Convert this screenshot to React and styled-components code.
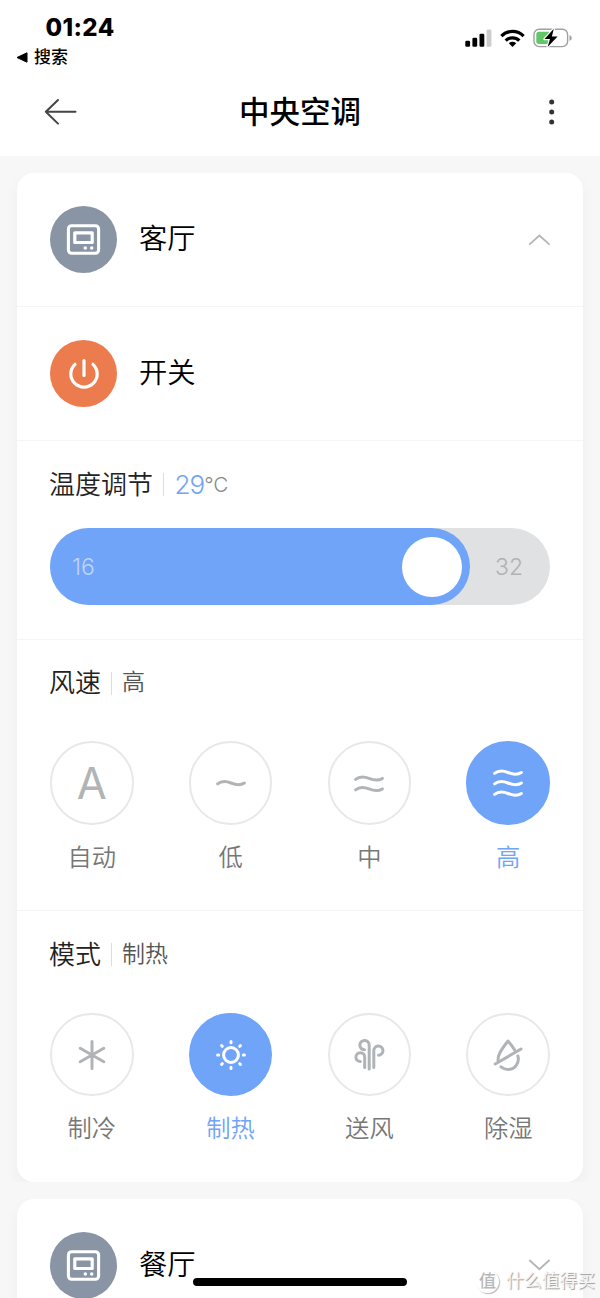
import React from 'react';
import styled, { createGlobalStyle } from 'styled-components';

const GlobalStyle = createGlobalStyle`
  * {
    box-sizing: border-box;
  }

  body {
    margin: 0;
    background: #f7f7f7;
    font-family: "Inter", "Noto Sans CJK SC", sans-serif;
  }
`;

const StyledScreen = styled.div`
  position: relative;
  width: 600px;
  height: 1298px;
  overflow: hidden;
  background: #f7f7f7;
`;

const StyledHeader = styled.header`
  height: 156px;
  background: #fff;
`;

const StyledStatusBar = styled.div`
  display: flex;
  justify-content: space-between;
  height: 68px;
  padding: 14px 27px 0 16px;
`;

const StyledTime = styled.div`
  padding-left: 29.5px;
  font-size: 24px;
  line-height: 28px;
  font-weight: 780;
  letter-spacing: 0.4px;
  color: #000;
`;

const StyledBackToApp = styled.div`
  display: flex;
  align-items: center;
  gap: 6px;
  margin-top: 5px;
  font-size: 17px;
  line-height: 20px;
  font-weight: 500;
  color: #000;
`;

const StyledStatusIcons = styled.div`
  display: flex;
  align-items: center;
  gap: 8px;
  height: 48px;
`;

const StyledNavBar = styled.div`
  display: flex;
  align-items: center;
  justify-content: space-between;
  height: 88px;
  padding: 0 43px;
`;

const StyledTitle = styled.h1`
  margin: 0;
  font-size: 30.5px;
  line-height: 40px;
  font-weight: 500;
  color: #000;
`;

const StyledMain = styled.main`
  display: flex;
  flex-direction: column;
  gap: 17px;
  padding: 17px;
`;

const StyledCard = styled.section`
  border-radius: 17px;
  background: #fff;
  box-shadow: 0 6px 16px rgba(0, 0, 0, 0.04);
  clip-path: inset(0 -17px);
`;

const StyledRow = styled.div`
  display: flex;
  align-items: center;
  height: 134px;
  padding: 0 33px;
  border-bottom: 1px solid #f5f5f5;
`;

const StyledRowIcon = styled.div`
  display: flex;
  align-items: center;
  justify-content: center;
  width: 67px;
  height: 67px;
  border-radius: 50%;
  background: ${(props) => props.$color};
`;

const StyledRowName = styled.div`
  flex: 1;
  padding: 0 0 1px 22px;
  font-size: 28.3px;
  line-height: 40px;
  font-weight: 350;
  color: #000;
`;

const StyledSection = styled.div`
  height: ${(props) => props.$height}px;
  padding: 24.5px 33px 0;

  & + & {
    border-top: 1px solid #f5f5f5;
  }
`;

const StyledSectionHead = styled.div`
  display: flex;
  align-items: center;
  height: 37px;
  margin-left: -1px;
  font-size: 26px;
  line-height: 37px;
  font-weight: 350;
  color: #222;
`;

const StyledDivider = styled.span`
  width: 1px;
  height: 23px;
  margin: 1px 10px 0 10px;
  background: #ddd;
`;

const StyledSectionValue = styled.span`
  font-size: 23px;
  font-weight: 330;
  color: #555;
`;

const StyledDegrees = styled.span`
  margin: 1px 0 0 0.5px;
  font-size: 26px;
  font-weight: 300;
  letter-spacing: -1px;
  color: #70a4f8;
`;

const StyledUnit = styled.span`
  font-size: 20.5px;
  font-weight: 300;
  color: #888;
`;

const StyledTrack = styled.div`
  display: flex;
  align-items: center;
  height: 77px;
  margin-top: 25.9px;
  border-radius: 39px;
  background: #dfe1e3;
  font-size: 23px;
  font-weight: 300;
`;

const StyledFill = styled.div`
  display: flex;
  align-items: center;
  justify-content: space-between;
  height: 77px;
  padding: 0 8px 0 22px;
  border-radius: 39px;
  background: #70a4f8;
  color: #bfd6fb;
`;

const StyledKnob = styled.div`
  width: 60px;
  height: 60px;
  border-radius: 50%;
  background: #fff;
`;

const StyledMax = styled.span`
  margin-left: 25px;
  color: #b0b2b3;
`;

const StyledOptions = styled.div`
  display: flex;
  justify-content: space-between;
  margin-top: 40px;
`;

const StyledOption = styled.div`
  width: 83.5px;
  font-size: 24.3px;
  line-height: 36px;
  font-weight: 330;
  text-align: center;
  color: ${(props) => (props.$active ? '#70a4f8' : '#777')};
`;

const StyledOptionCircle = styled.div`
  display: flex;
  align-items: center;
  justify-content: center;
  width: 83.5px;
  height: 83.5px;
  margin-bottom: 14.2px;
  border: 2px solid ${(props) => (props.$active ? '#70a4f8' : '#e7e9e9')};
  border-radius: 50%;
  background: ${(props) => (props.$active ? '#70a4f8' : '#fff')};
  color: ${(props) => (props.$active ? '#fff' : '#b0b4b7')};
`;

const StyledLetter = styled.span`
  font-size: 43.5px;
  line-height: 50px;
  font-weight: 430;
`;

const StyledHomeIndicator = styled.div`
  position: absolute;
  left: 193px;
  bottom: 12px;
  width: 214px;
  height: 8px;
  border-radius: 4px;
  background: #000;
`;

const StyledWatermark = styled.div`
  position: absolute;
  right: 5px;
  bottom: 4px;
  display: flex;
  align-items: center;
  gap: 7px;
  font-size: 17.8px;
  line-height: 26px;
  color: #f6f6f6;
  text-shadow: 1px 1px 1px #999;
`;

const StyledWatermarkBadge = styled.span`
  width: 23px;
  height: 23px;
  border-radius: 50%;
  font-size: 17px;
  line-height: 22px;
  font-weight: 500;
  text-align: center;
  color: #b8b8b8;
  text-shadow: none;
  box-shadow: 1px 1px 1px #bbb;
`;

const OptionSvg = ({ children }) => (
  <svg
    width="40"
    height="40"
    viewBox="-20 -20 40 40"
    fill="none"
    stroke="currentColor"
    strokeWidth="3"
    strokeLinecap="round"
    strokeLinejoin="round"
  >
    {children}
  </svg>
);

const Waves = ({ rows }) => (
  <OptionSvg>
    {rows.map((y) => (
      <path key={y} d={`M-13.4 ${y + 0.9}C-9 ${y - 2.6} -4 ${y - 1.6} 0 ${y}S9 ${y + 2.8} 13.4 ${y}`} />
    ))}
  </OptionSvg>
);

const PanelIcon = () => (
  <svg width="35" height="31" viewBox="0 0 35 31" fill="none" stroke="#fff" strokeWidth="3.1">
    <rect x="2.4" y="1.7" width="30.2" height="27.6" rx="3.2" />
    <rect x="8.8" y="8.8" width="17.4" height="9.7" strokeWidth="3.2" strokeLinejoin="round" />
    <circle cx="19.3" cy="24" r="1.8" fill="#fff" stroke="none" />
    <circle cx="25.7" cy="24" r="1.8" fill="#fff" stroke="none" />
  </svg>
);

const PowerIcon = () => (
  <svg width="34" height="34" viewBox="-17 -17 34 34" fill="none" stroke="#fff" strokeWidth="3.2" strokeLinecap="round">
    <path d="M0 -13.5V1.5M-9 -9.7A13.2 13.2 0 1 0 9 -9.7" />
  </svg>
);

const Chevron = ({ down }) => (
  <svg width="22" height="12" viewBox="0 0 22 12" fill="none" stroke="#b5b5b5" strokeWidth="1.8" strokeLinecap="round">
    <path d={down ? 'M1.8 1.5L11.4 10.2L21 1.5' : 'M1.8 10.2L11.4 1.5L21 10.2'} />
  </svg>
);

const fanSpeeds = [
  { label: '自动', icon: <StyledLetter>A</StyledLetter> },
  { label: '低', icon: <Waves rows={[0]} /> },
  { label: '中', icon: <Waves rows={[-4.6, 5.9]} /> },
  { label: '高', icon: <Waves rows={[-10.5, 0, 10.5]} />, active: true },
];

const modes = [
  {
    label: '制冷',
    icon: (
      <OptionSvg>
        <path d="M0 -13.5V13.5M-11.8 -6.8L11.8 6.8M11.8 -6.8L-11.8 6.8" />
      </OptionSvg>
    ),
  },
  {
    label: '制热',
    icon: (
      <OptionSvg>
        <circle r="7.4" />
        <path d="M0 -13.4V-12.3M0 12.3V13.4M-13.4 0H-12.3M12.3 0H13.4M-9.4 -9.4L-8.7 -8.7M8.7 8.7L9.4 9.4M-9.4 9.4L-8.7 8.7M8.7 -8.7L9.4 -9.4" />
      </OptionSvg>
    ),
    active: true,
  },
  {
    label: '送风',
    icon: (
      <OptionSvg>
        <path d="M0.2 14V-9.5A4.7 4.7 0 1 0 -4.5 -5.2" />
        <path d="M-4.3 12.5V2A4.4 4.4 0 1 0 -8.7 6.5" />
        <path d="M4.8 12.5V-4A4.6 4.6 0 1 1 9.5 0.2" />
      </OptionSvg>
    ),
  },
  {
    label: '除湿',
    icon: (
      <OptionSvg>
        <path d="M-12.8 9L13 -6" />
        <path d="M-9.7 6.5C-11 1 -7 -5 0 -14C2.5 -11 4.5 -8.5 6.5 -5.2" />
        <path d="M9.9 1C12 9 6 14.5 0 14.5C-3 14.5 -5 13.5 -7 11.8" />
      </OptionSvg>
    ),
  },
];

const OptionList = ({ items }) => (
  <StyledOptions>
    {items.map((item) => (
      <StyledOption key={item.label} $active={item.active}>
        <StyledOptionCircle $active={item.active}>{item.icon}</StyledOptionCircle>
        {item.label}
      </StyledOption>
    ))}
  </StyledOptions>
);

const Header = () => (
  <StyledHeader>
    <StyledStatusBar>
      <div>
        <StyledTime>01:24</StyledTime>
        <StyledBackToApp>
          <svg width="12" height="11" viewBox="0 0 12 11">
            <path d="M1 5.5L11 0.8V10.2Z" fill="#000" stroke="#000" strokeLinejoin="round" />
          </svg>
          搜索
        </StyledBackToApp>
      </div>
      <StyledStatusIcons>
        <svg width="27" height="18" viewBox="0 0 27 18">
          <rect x="0.3" y="11.8" width="4.8" height="6" rx="1.3" />
          <rect x="7.4" y="8.8" width="4.8" height="9" rx="1.3" />
          <rect x="14.5" y="4.7" width="4.8" height="13.1" rx="1.3" />
          <rect x="21.6" y="0.5" width="4.8" height="17.3" rx="1.3" fill="#ccc" />
        </svg>
        <svg width="25" height="18" viewBox="0 0 25 18" fill="none" stroke="#000" strokeWidth="3.2">
          <path d="M1.4 7.1A15.6 15.6 0 0 1 23.6 7.1" />
          <path d="M5.7 11.6A9.6 9.6 0 0 1 19.3 11.6" />
          <path d="M12.5 18L8.8 14.3A5.4 5.4 0 0 1 16.2 14.3Z" fill="#000" stroke="none" />
        </svg>
        <svg width="40" height="22" viewBox="0 0 40 22">
          <rect x="1" y="2.2" width="33.6" height="17.4" rx="5.2" fill="none" stroke="#a0a0a0" strokeWidth="1.4" />
          <path d="M36.5 8V14Q38.8 12.8 38.8 11T36.5 8Z" fill="#a0a0a0" />
          <path d="M6 4.8H16V17H6Q3.3 17 3.3 14.3V7.5Q3.3 4.8 6 4.8Z" fill="#62c766" />
          <path d="M20.8 1.8L11.5 12H17L14.6 20L24.6 9.6H18.9Z" fill="#000" stroke="#fff" strokeWidth="2.4" paintOrder="stroke" strokeLinejoin="round" />
        </svg>
      </StyledStatusIcons>
    </StyledStatusBar>
    <StyledNavBar>
      <svg width="34" height="28" viewBox="0 0 34 28" fill="none" stroke="#444" strokeWidth="2" strokeLinecap="round" strokeLinejoin="round">
        <path d="M15 2L2.8 13.8L15 25.6M2.8 13.8H32.5" />
      </svg>
      <StyledTitle>中央空调</StyledTitle>
      <svg width="34" height="28" viewBox="0 0 34 28" fill="#333">
        <circle cx="28.7" cy="3.9" r="2.5" />
        <circle cx="28.7" cy="13.9" r="2.5" />
        <circle cx="28.7" cy="23.9" r="2.5" />
      </svg>
    </StyledNavBar>
  </StyledHeader>
);

const min = 16;
const max = 32;
const temperature = 29;

// the knob travels over the track minus its own cap
const fillWidth = 76 + ((temperature - min) / (max - min)) * (500 - 76.5);

const App = () => {
  return (
    <StyledScreen>
      <GlobalStyle />
      <Header />
      <StyledMain>
        <StyledCard>
          <StyledRow>
            <StyledRowIcon $color="#8994a5"><PanelIcon /></StyledRowIcon>
            <StyledRowName>客厅</StyledRowName>
            <Chevron />
          </StyledRow>
          <StyledRow>
            <StyledRowIcon $color="#ec7b4d"><PowerIcon /></StyledRowIcon>
            <StyledRowName>开关</StyledRowName>
          </StyledRow>
          <StyledSection $height={197.6}>
            <StyledSectionHead>
              温度调节
              <StyledDivider />
              <StyledDegrees>{temperature}</StyledDegrees>
              <StyledUnit>℃</StyledUnit>
            </StyledSectionHead>
            <StyledTrack>
              <StyledFill style={{ width: fillWidth }}>
                {min}
                <StyledKnob />
              </StyledFill>
              <StyledMax>{max}</StyledMax>
            </StyledTrack>
          </StyledSection>
          <StyledSection $height={271.7}>
            <StyledSectionHead>
              风速
              <StyledDivider />
              <StyledSectionValue>高</StyledSectionValue>
            </StyledSectionHead>
            <OptionList items={fanSpeeds} />
          </StyledSection>
          <StyledSection $height={271.7}>
            <StyledSectionHead>
              模式
              <StyledDivider />
              <StyledSectionValue>制热</StyledSectionValue>
            </StyledSectionHead>
            <OptionList items={modes} />
          </StyledSection>
        </StyledCard>
        <StyledCard>
          <StyledRow>
            <StyledRowIcon $color="#8994a5"><PanelIcon /></StyledRowIcon>
            <StyledRowName>餐厅</StyledRowName>
            <Chevron down />
          </StyledRow>
        </StyledCard>
      </StyledMain>
      <StyledHomeIndicator />
      <StyledWatermark>
        <StyledWatermarkBadge>值</StyledWatermarkBadge>
        什么值得买
      </StyledWatermark>
    </StyledScreen>
  );
};

export default App;
